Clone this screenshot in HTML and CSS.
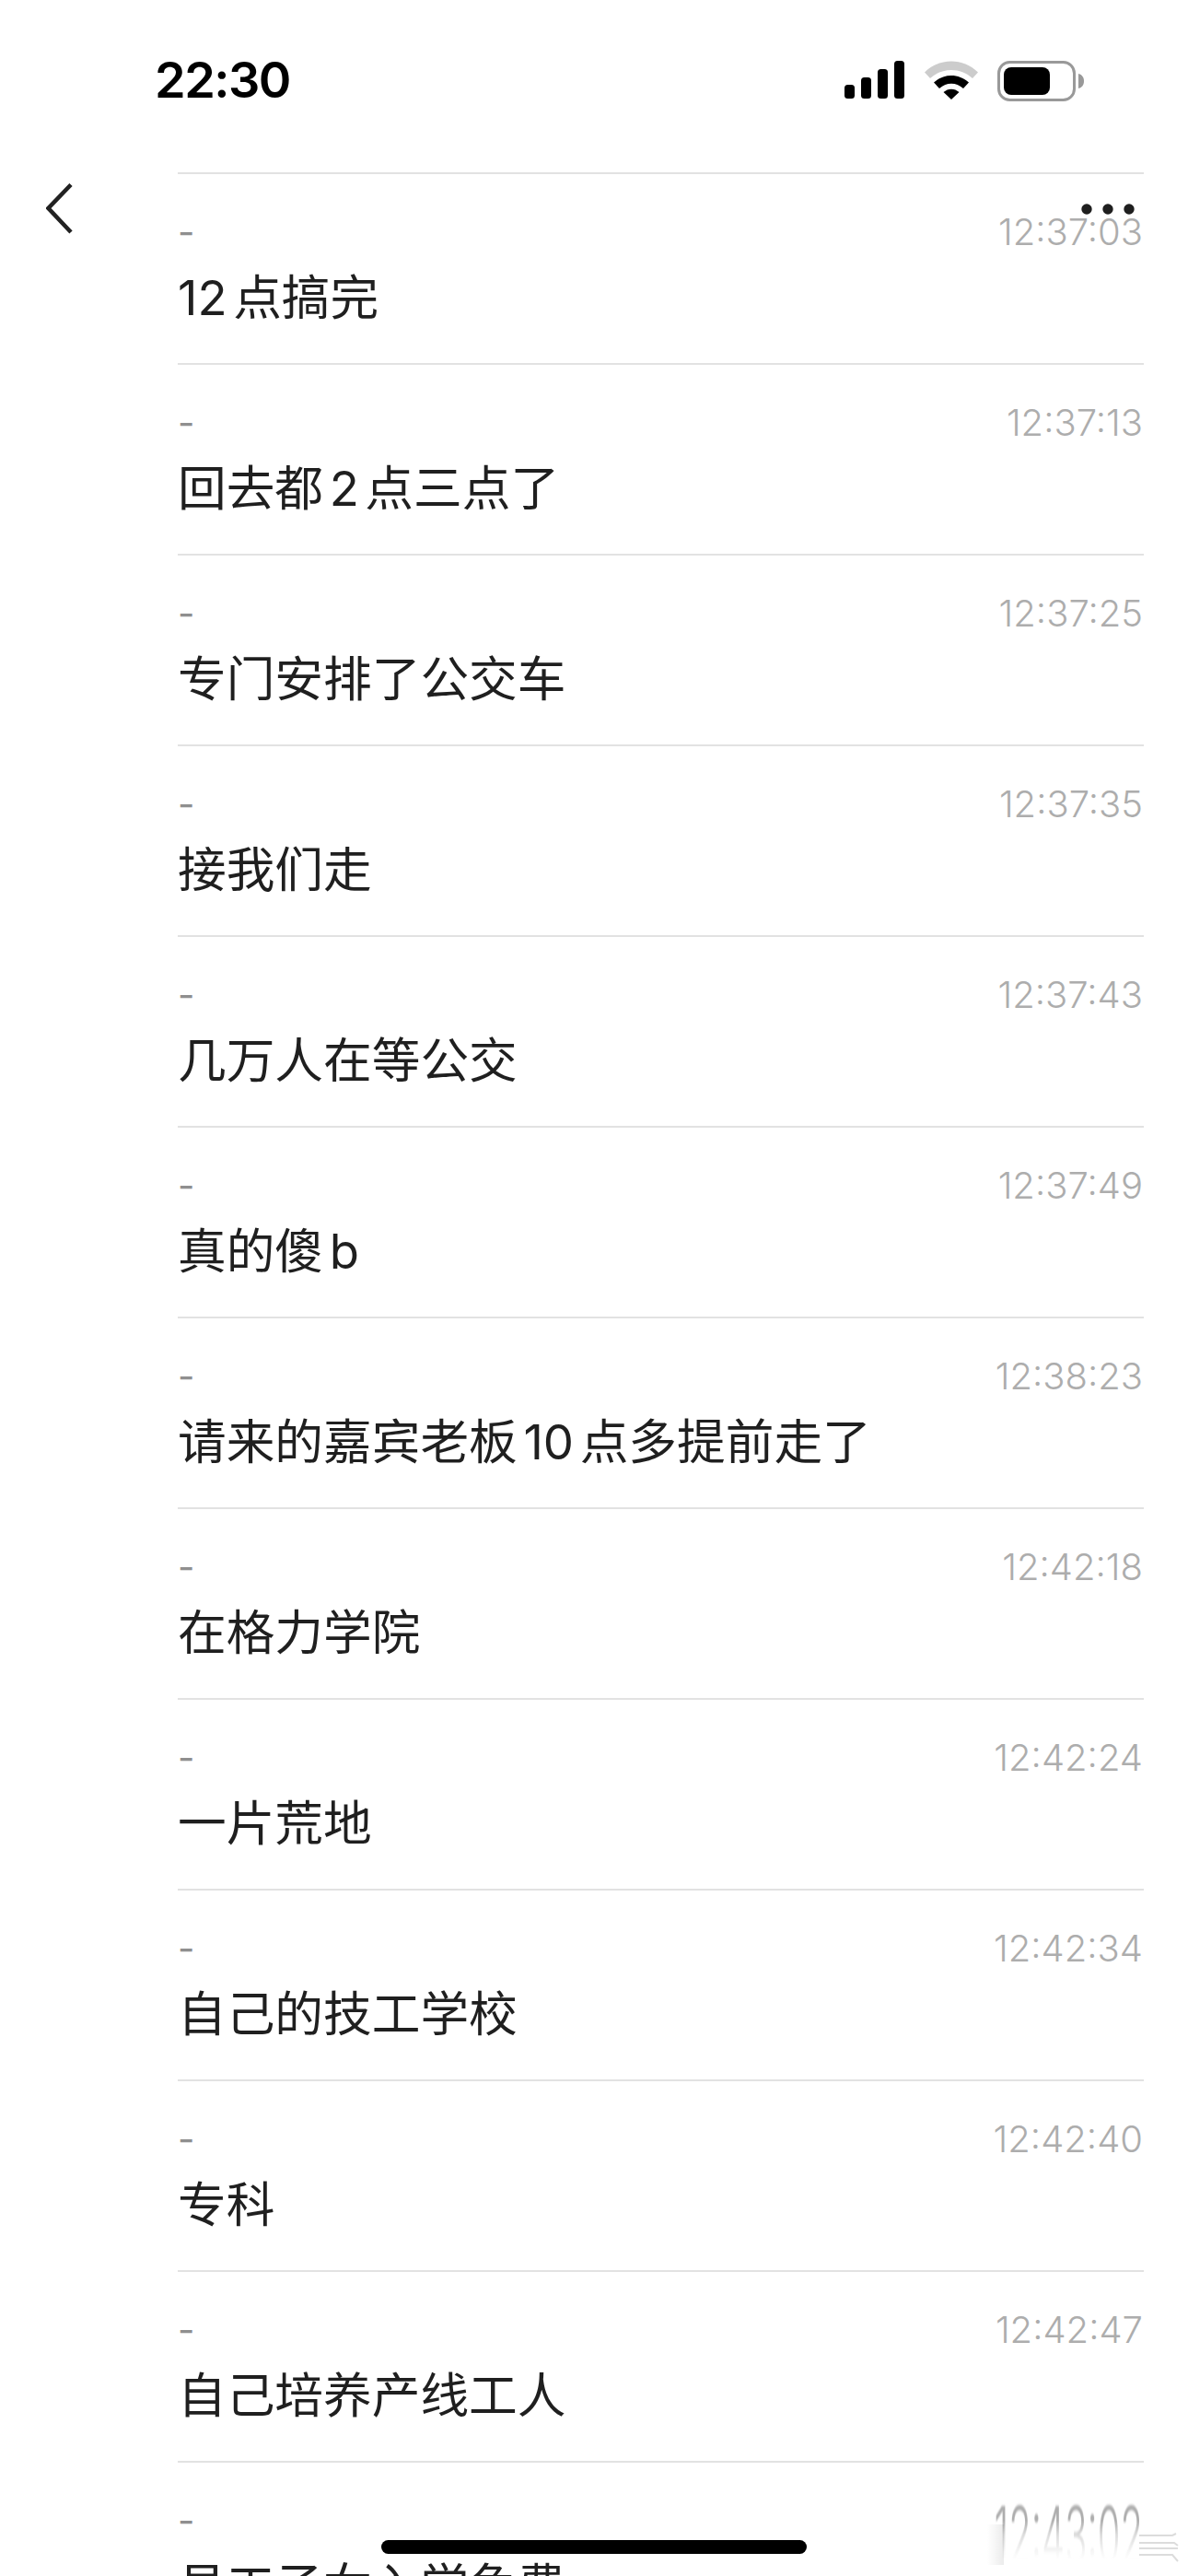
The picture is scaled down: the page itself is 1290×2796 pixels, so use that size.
FILE: index.html
```html
<!DOCTYPE html>
<html lang="zh-CN">
<head>
<meta charset="utf-8">
<title>消息记录</title>
<link rel="stylesheet" href="styles.css">
</head>
<body>
<div class="screen">
  <header class="status">
    <span class="clock">22:30</span>
    <div class="status-icons">
      <svg class="signal" width="66" height="42" viewBox="0 0 66 42"><rect x="0" y="26" width="11" height="15" rx="3.5"/><rect x="18" y="18" width="11" height="23" rx="3.5"/><rect x="36" y="9" width="11" height="32" rx="3.5"/><rect x="54" y="0" width="11" height="41" rx="3.5"/></svg>
      <svg class="wifi" width="58" height="42" viewBox="0 0 58 42"><path d="M0 12.5C16 -3.5 42 -3.5 58 12.5L52 19C39 7 19 7 6 19Z" fill="#ccc"/><path d="M10 23.5C21 13.500 37 13.500 48 23.500L42 30C34 23 24 23 16 30Z"/><path d="M20.500 34C25.500 29.500 32.500 29.500 37.500 34L29 42Z"/></svg>
      <svg class="battery" width="94" height="44" viewBox="0 0 94 44"><rect x="1.500" y="1.500" width="82" height="41" rx="12" fill="none" stroke="#999" stroke-width="3"/><rect x="7" y="7" width="50" height="30" rx="8"/><path d="M88 14C92 15 94 18 94 22C94 26 92 29 88 30Z" fill="#999"/></svg>
    </div>
  </header>

  <svg class="back" width="30" height="56" viewBox="0 0 30 56"><path d="M27 1.500L2.500 27L27 53" fill="none" stroke="#222" stroke-width="4.500"/></svg>
  <svg class="more" width="58" height="12" viewBox="0 0 58 12"><circle cx="6" cy="6" r="5.700"/><circle cx="29" cy="6" r="5.700"/><circle cx="52" cy="6" r="5.700"/></svg>

  <main class="list">
    <article class="row"><div class="meta"><span class="dash">-</span><time class="stamp">12:37:03</time></div><p class="msg">12点搞完</p></article>
    <article class="row"><div class="meta"><span class="dash">-</span><time class="stamp">12:37:13</time></div><p class="msg">回去都2点三点了</p></article>
    <article class="row"><div class="meta"><span class="dash">-</span><time class="stamp">12:37:25</time></div><p class="msg">专门安排了公交车</p></article>
    <article class="row"><div class="meta"><span class="dash">-</span><time class="stamp">12:37:35</time></div><p class="msg">接我们走</p></article>
    <article class="row"><div class="meta"><span class="dash">-</span><time class="stamp">12:37:43</time></div><p class="msg">几万人在等公交</p></article>
    <article class="row"><div class="meta"><span class="dash">-</span><time class="stamp">12:37:49</time></div><p class="msg">真的傻b</p></article>
    <article class="row"><div class="meta"><span class="dash">-</span><time class="stamp">12:38:23</time></div><p class="msg">请来的嘉宾老板10点多提前走了</p></article>
    <article class="row"><div class="meta"><span class="dash">-</span><time class="stamp">12:42:18</time></div><p class="msg">在格力学院</p></article>
    <article class="row"><div class="meta"><span class="dash">-</span><time class="stamp">12:42:24</time></div><p class="msg">一片荒地</p></article>
    <article class="row"><div class="meta"><span class="dash">-</span><time class="stamp">12:42:34</time></div><p class="msg">自己的技工学校</p></article>
    <article class="row"><div class="meta"><span class="dash">-</span><time class="stamp">12:42:40</time></div><p class="msg">专科</p></article>
    <article class="row"><div class="meta"><span class="dash">-</span><time class="stamp">12:42:47</time></div><p class="msg">自己培养产线工人</p></article>
    <article class="row"><div class="meta"><span class="dash">-</span><time class="stamp stamp-smeared">12:43:02</time></div><p class="msg">员工子女入学免费</p></article>
  </main>

  <div class="smudge"></div>
  <svg class="streaks" width="44" height="34" viewBox="0 0 44 34"><path d="M0 3H36L40 1M0 11H38L42 14M0 17H42M0 24H36L42 31" fill="none" stroke="#dcdcdc" stroke-width="2"/></svg>
  <div class="home-bar"></div>
</div>
</body>
</html>
```
FILE: styles.css
```css
* { box-sizing: border-box; }
html, body { margin: 0; padding: 0; background: #fff; }
.screen {
  position: relative;
  width: 1290px;
  height: 2796px;
  overflow: hidden;
  background: #fff;
  font-family: "Inter", "Noto Sans CJK SC", sans-serif;
}
.status {
  height: 187px;
  display: flex;
  justify-content: space-between;
  align-items: flex-start;
  padding: 62px 0 0 168px;
}
.clock {
  font-size: 54px;
  line-height: 50px;
  font-weight: 600;
  color: #000;
  letter-spacing: -1.5px;
}
.status-icons {
  display: flex;
  align-items: flex-start;
  gap: 21px;
  padding: 4px 113px 0 0;
}
.back { position: absolute; left: 50px; top: 199px; }
.more { position: absolute; left: 1174px; top: 221px; fill: #1f1f1f; }
.streaks { position: absolute; left: 1237px; top: 2749px; }
.smudge {
  position: absolute;
  left: 1072px;
  top: 2740px;
  width: 18px;
  height: 44px;
  background: linear-gradient(to right, rgba(0, 0, 0, 0), rgba(0, 0, 0, 0.08));
}
.list {
  margin-left: 193px;
  width: 1049px;
  border-top: 2px solid #e2e2e2;
}
.row {
  height: 207px;
  border-bottom: 2px solid #e2e2e2;
  padding-top: 40px;
}
.meta {
  display: flex;
  justify-content: space-between;
  align-items: flex-start;
  height: 46px;
}
.dash {
  font-size: 40px;
  line-height: 46px;
  font-weight: 400;
  color: #8f8f8f;
}
.stamp {
  font-size: 40px;
  line-height: 46px;
  font-weight: 300;
  color: #adadad;
  padding-right: 1px;
}
.stamp-smeared {
  display: inline-block;
  transform: scaleY(2.2);
  transform-origin: 50% 9px;
  filter: blur(0.7px);
  -webkit-mask-image: linear-gradient(to bottom, #000 33%, rgba(0, 0, 0, 0.45) 48%, rgba(0, 0, 0, 0.12) 66%, transparent 75%);
  mask-image: linear-gradient(to bottom, #000 33%, rgba(0, 0, 0, 0.45) 48%, rgba(0, 0, 0, 0.12) 66%, transparent 75%);
}
.msg {
  margin: 16px 0 0;
  font-size: 52.7px;
  line-height: 64px;
  font-weight: 400;
  color: #1f1f1f;
  text-autospace: normal;
}
.home-bar {
  position: absolute;
  left: 414px;
  top: 2757px;
  width: 462px;
  height: 15px;
  border-radius: 8px;
  background: #000;
}
```
